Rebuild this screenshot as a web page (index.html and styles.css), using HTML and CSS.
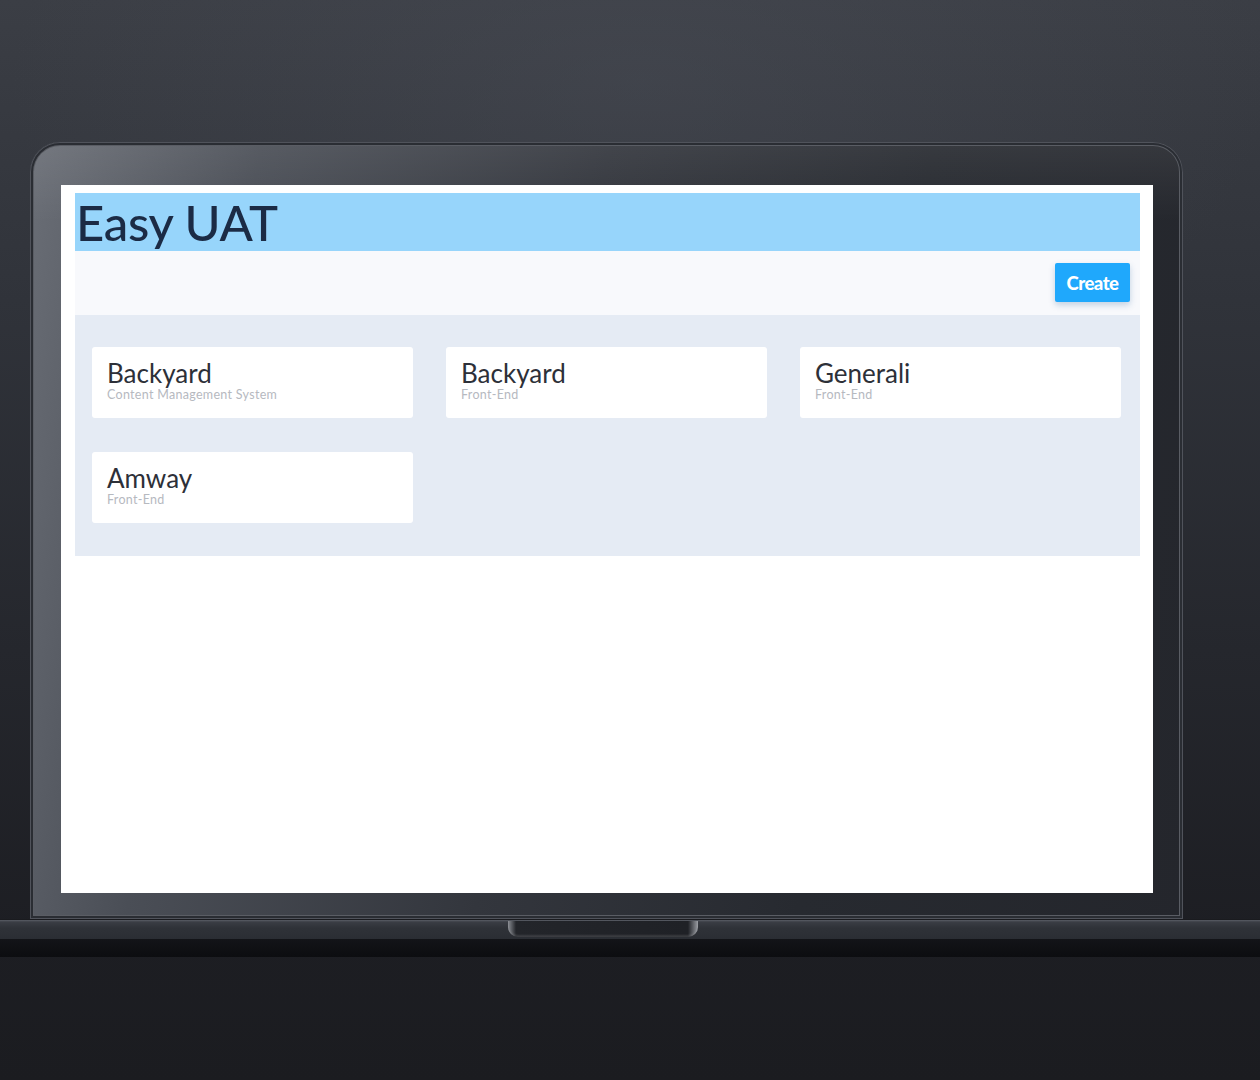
FILE: index.html
```html
<!DOCTYPE html>
<html>
<head>
<meta charset="utf-8">
<title>Easy UAT</title>
<link rel="stylesheet" href="styles.css">
</head>
<body>
<div class="scene">
  <div class="lid">
    <div class="screen">
      <div class="app">
        <h1 class="app-title">Easy UAT</h1>
        <div class="toolbar">
          <button class="btn-create">Create</button>
        </div>
        <div class="panel">
          <div class="card"><div class="card-title">Backyard</div><div class="card-sub">Content Management System</div></div>
          <div class="card"><div class="card-title">Backyard</div><div class="card-sub">Front-End</div></div>
          <div class="card"><div class="card-title">Generali</div><div class="card-sub">Front-End</div></div>
          <div class="card"><div class="card-title">Amway</div><div class="card-sub">Front-End</div></div>
        </div>
      </div>
    </div>
  </div>
  <div class="base">
    <div class="base-top"><div class="notch"></div></div>
    <div class="base-bottom"></div>
  </div>
</div>
</body>
</html>
```

FILE: styles.css
```css
* { box-sizing: border-box; }
html, body { margin: 0; padding: 0; }
body {
  width: 1260px;
  height: 1080px;
  overflow: hidden;
  font-family: "Lato", "Open Sans", "Liberation Sans", sans-serif;
  background:
    radial-gradient(ellipse 900px 500px at 640px 80px, rgba(80,84,94,0.35), rgba(0,0,0,0) 70%),
    linear-gradient(180deg, #3b3e45 0px, #30333a 300px, #25272d 650px, #1d1e23 930px, #1b1c20 1080px);
}
.scene { padding-top: 142px; }

.lid {
  margin-left: 30px;
  width: 1153px;
  height: 777px;
  border-radius: 30px 30px 0 0;
  padding: 43px 30px 0 31px;
  background:
    linear-gradient(180deg, rgba(255,255,255,0.08), rgba(0,0,0,0) 80px),
    linear-gradient(100deg, #6a6e76 0%, #4a4e56 18%, #33363d 45%, #272a30 70%, #24262c 100%);
  box-shadow: inset 0 0 0 1px #50535b, inset 0 0 0 3px #2a2d33, inset 0 0 0 4px #5a5d64;
}
.screen {
  width: 1092px;
  height: 708px;
  background: #ffffff;
  padding: 8px 13px 0 14px;
}
.app { display: flex; flex-direction: column; }

.app-title {
  margin: 0;
  height: 58px;
  background: #97d5fb;
  color: #1b2b45;
  font-family: "Lato", "Open Sans", sans-serif;
  font-weight: 500;
  font-size: 49px;
  line-height: 58px;
  padding-left: 1px;
  letter-spacing: -0.3px;
}
.toolbar {
  height: 64px;
  background: #f8f9fc;
  display: flex;
  justify-content: flex-end;
  align-items: flex-start;
  padding: 12px 10px 0 0;
}
.btn-create {
  width: 75px;
  height: 39px;
  border: none;
  border-radius: 2px;
  background: #1fa8fc;
  color: #ffffff;
  font-family: "Lato", "Liberation Sans", sans-serif;
  font-weight: 900;
  font-size: 18.5px;
  letter-spacing: -0.5px;
  padding: 0;
  box-shadow: 0 3px 6px rgba(30, 90, 150, 0.25);
}
.panel {
  background: #e5ebf4;
  padding: 32px 18px 33px 17px;
  display: grid;
  grid-template-columns: repeat(3, 321px);
  column-gap: 33px;
  row-gap: 34px;
}
.card {
  height: 71px;
  background: #ffffff;
  border-radius: 3px;
  padding: 13px 15px 0 15px;
}
.card-title {
  color: #2d3038;
  font-size: 26px;
  line-height: 27px;
  font-weight: 400;
}
.card-sub {
  color: #b6b9bf;
  font-size: 12.5px;
  line-height: 14px;
  margin-top: 1px;
  letter-spacing: 0.3px;
}

.base { width: 1260px; }
.base-top {
  height: 20px;
  background: linear-gradient(180deg, #5a5e66 0px, #3a3d44 2px, #2f3238 8px, #2a2d33 20px);
  border-top: 1px solid #1a1b1f;
  position: relative;
}
.notch {
  position: absolute;
  left: 508px;
  top: 1px;
  width: 190px;
  height: 16px;
  border-radius: 0 0 10px 10px;
  background: linear-gradient(90deg, #8a8d93 0px, #23252a 8px, #1f2126 180px, #9a9da3 190px);
  box-shadow: inset 0 -2px 2px rgba(255,255,255,0.12);
}
.base-bottom {
  height: 18px;
  background: linear-gradient(180deg, #131418, #0c0d10);
}
```
